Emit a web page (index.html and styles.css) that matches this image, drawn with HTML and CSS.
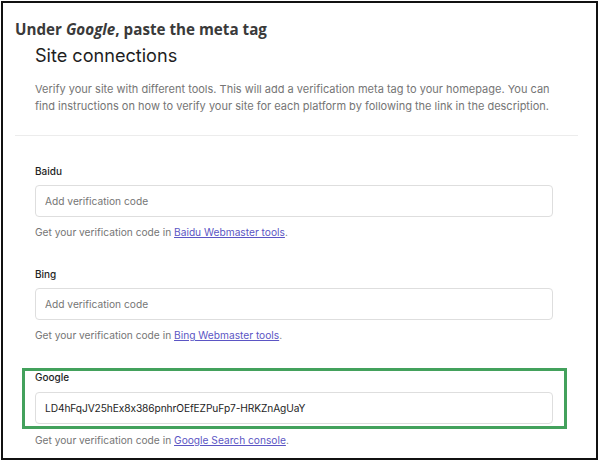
FILE: index.html
```html
<!DOCTYPE html>
<html lang="en">
<head>
<meta charset="utf-8">
<title>Site connections</title>
<link rel="stylesheet" href="styles.css">
</head>
<body>
<div class="frame">
  <h2 class="caption">Under <em>Google</em>, paste the meta tag</h2>
  <section class="card">
    <header class="card-head">
      <h1 class="title">Site connections</h1>
      <p class="intro">Verify your site with different tools. This will add a verification meta tag to your homepage. You can find instructions on how to verify your site for each platform by following the link in the description.</p>
    </header>
    <div class="card-body">
      <div class="field">
        <label class="label" for="baidu">Baidu</label>
        <input class="input" id="baidu" type="text" placeholder="Add verification code">
        <p class="help">Get your verification code in <a href="#">Baidu Webmaster tools</a>.</p>
      </div>
      <div class="field">
        <label class="label" for="bing">Bing</label>
        <input class="input" id="bing" type="text" placeholder="Add verification code">
        <p class="help">Get your verification code in <a href="#">Bing Webmaster tools</a>.</p>
      </div>
      <div class="field field-last">
        <div class="highlight">
          <label class="label label-tight" for="google">Google</label>
          <input class="input input-filled" id="google" type="text" value="LD4hFqJV25hEx8x386pnhrOEfEZPuFp7-HRKZnAgUaY">
        </div>
        <p class="help help-after">Get your verification code in <a href="#">Google Search console</a>.</p>
      </div>
    </div>
  </section>
</div>
</body>
</html>
```
FILE: styles.css
```css
* { box-sizing: border-box; }
html, body { margin: 0; padding: 0; background: #fff; }
body {
  font-family: Inter, "Noto Sans", sans-serif;
  font-feature-settings: "calt" 0;
  color: #1e1e1e;
}

.frame {
  margin: 1px 0 0 1px;
  width: 597px;
  height: 459px;
  border: 2px solid #111;
  padding: 16px 18px 0 12px;
  overflow: hidden;
}

.caption {
  margin: 0;
  font-family: "Open Sans", sans-serif;
  font-weight: 700;
  font-size: 15.2px;
  line-height: 20px;
  color: #3a3a3a;
}
.caption em { font-style: italic; }

.card-head {
  padding: 4px 25px 0 20px;
  border-bottom: 1px solid #ececec;
  height: 97px;
}

.title {
  margin: 0;
  font-weight: 400;
  font-size: 18.1px;
  line-height: 24px;
  color: #1e1e1e;
}

.intro {
  margin: 14px 0 0;
  font-size: 11px;
  line-height: 17px;
  color: #757575;
}

.card-body {
  padding: 27px 25px 0 20px;
}

.field { margin-bottom: 26px; }
.field-last { margin-top: -1px; }

.label {
  display: block;
  font-size: 10px;
  font-weight: 500;
  line-height: 16px;
  margin-bottom: 6px;
  color: #1e1e1e;
}

.input {
  display: block;
  width: 100%;
  height: 32px;
  border: 1px solid #dedede;
  border-radius: 4px;
  padding: 0 9px;
  font-family: Inter, "Noto Sans", sans-serif;
  font-feature-settings: "calt" 0;
  font-size: 10.2px;
  color: #1e1e1e;
  background: #fff;
  outline: none;
}
.input::placeholder { color: #757575; }
.input-filled { letter-spacing: -0.1px; }

.help {
  margin: 7px 0 0;
  font-size: 10.2px;
  line-height: 16px;
  color: #757575;
}
.help a { color: #5b55c4; text-decoration: underline; }

.highlight {
  margin: 0 -14px 0 -13px;
  padding: 0 11px 2px 10px;
  border: 3px solid #43a15c;
}
.label-tight { line-height: 12px; margin-bottom: 9px; }
.help-after { margin-top: 3px; }
```
